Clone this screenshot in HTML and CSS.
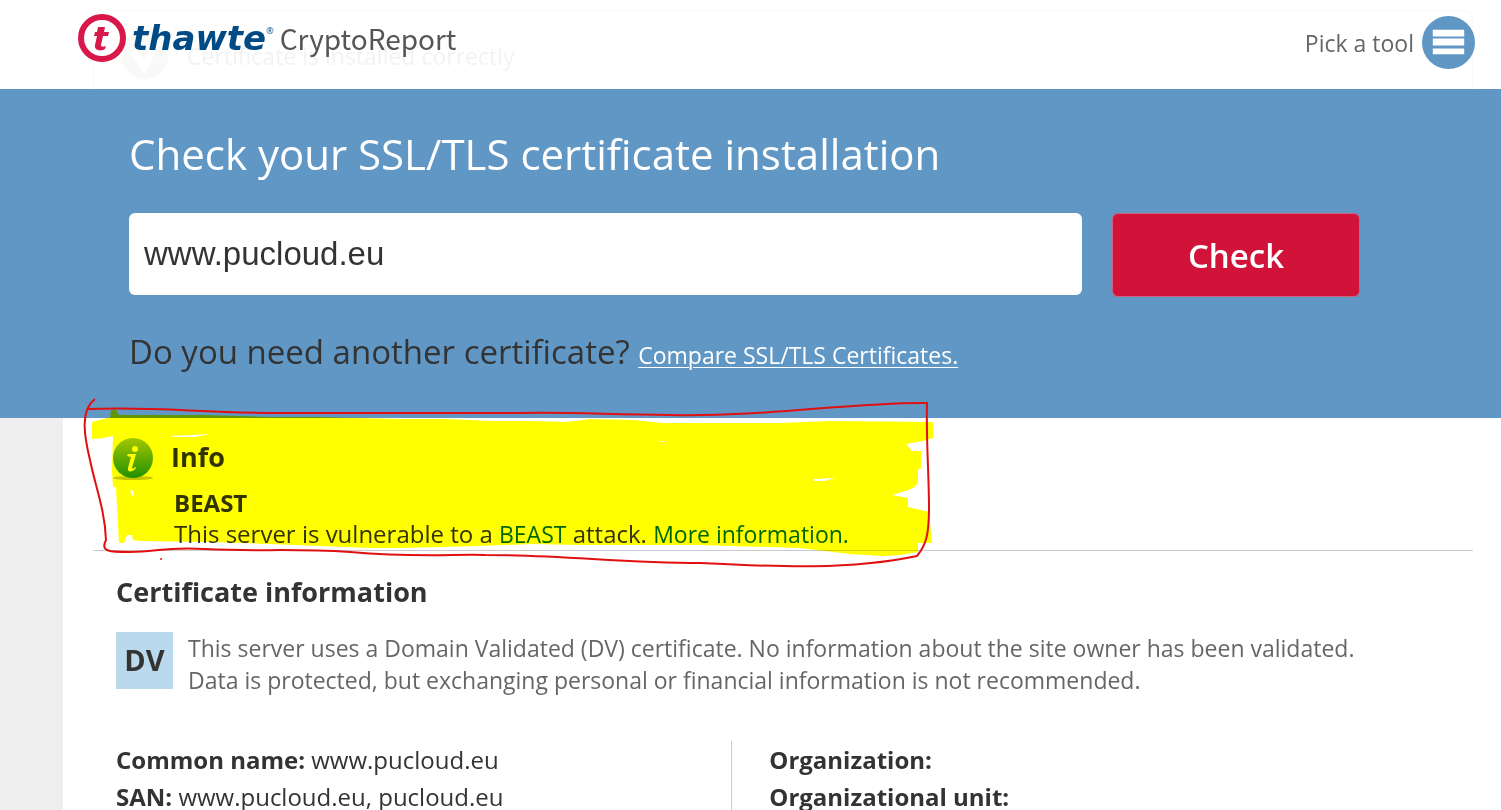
FILE: index.html
```html
<!DOCTYPE html>
<html lang="en">
<head>
<meta charset="utf-8">
<title>thawte CryptoReport</title>
<link rel="stylesheet" href="styles.css">
</head>
<body>
<header class="site-header">
  <div class="under-panel" aria-hidden="true">
    <svg class="under-icon" viewBox="0 0 48 48"><circle cx="24" cy="24" r="24" fill="#8cb878"/><path d="M12 20l11 16 13-26" fill="none" stroke="#fff" stroke-width="8"/></svg>
    <span>Certificate is installed correctly</span>
  </div>
  <a class="brand" href="#">
    <svg class="brand-mark" viewBox="0 0 48 48" aria-hidden="true">
      <circle cx="24" cy="24" r="21" fill="#fff" stroke="#d8184b" stroke-width="6"/>
      <path d="M20 13h7l-1 5h5l-1 4h-5l-2 9c0 2 2 2 5 1l-1 3c-5 3-11 1-10-4l2-9h-3l1-4h2z" fill="#d8184b"/>
    </svg>
    <span class="brand-name">thawte</span><span class="brand-reg">®</span>
    <span class="brand-product">CryptoReport</span>
  </a>
  <button class="tool-picker" type="button">
    <span>Pick a tool</span>
    <svg class="tool-icon" viewBox="0 0 54 54" aria-hidden="true">
      <circle cx="27" cy="27" r="27" fill="#6097c5"/>
      <path d="M11 14h32v7H11zM11 23h32v7H11zM11 33h32v6H11z" fill="#fff"/>
    </svg>
  </button>
</header>
<main>
  <section class="checker">
    <h1 class="checker-title"><label for="host">Check your SSL/TLS certificate installation</label></h1>
    <form class="checker-form">
      <input class="host-input" id="host" type="text" value="www.pucloud.eu">
      <button class="check-button" type="button">Check</button>
    </form>
    <p class="compare">Do you need another certificate? <a class="compare-link" href="#">Compare SSL/TLS Certificates.</a></p>
  </section>
  <section class="results">
    <div class="info">
      <svg class="info-icon" viewBox="0 0 42 42" aria-hidden="true">
        <defs><linearGradient id="green" x1="0" y1="0" x2="0" y2="1"><stop offset="0" stop-color="#a4c71d"/><stop offset="1" stop-color="#219100"/></linearGradient></defs>
        <ellipse cx="21" cy="40" rx="20" ry="2" fill="#8c8c8c" opacity=".5"/>
        <circle cx="21" cy="20" r="20" fill="url(#green)"/>
        <circle cx="23" cy="11" r="3" fill="#fff"/>
        <path d="M16 16h8l-4 14c0 1 1 1 3-1l1 1c-3 4-9 5-8 0l3-11-4-1z" fill="#fff"/>
      </svg>
      <div class="info-text">
        <h2 class="heading">Info</h2>
        <div class="info-body">
          <h3 class="info-name">BEAST</h3>
          <p class="info-line">This server is vulnerable to a <a class="link" href="#">BEAST</a> attack. <a class="link" href="#">More information.</a></p>
        </div>
      </div>
      <svg class="marker" viewBox="0 0 860 180" aria-hidden="true">
        <path fill="#ff0" fill-rule="evenodd" d="M27 18H30L31 10H36L39 15L123 15L190 17L237 17L320 19L367 19L410 21L450 21L487 22L510 19L553 20L583 23H700L750 21L853 22V38L843 41L826 44L832 51H841V68L838 70V80C838 89 825 91 812 95L828 98V107L849 112L852 143H838V152L820 155L803 156L770 154L720 148L620 145L500 145L453 144L400 146L320 148L290 148L190 144L130 142L60 141L53 140L52 135L47 135L44 143H39L36 87H33L32 70L33 36L24 38L12 39V22ZM91 36L112 35L130 34L115 37L93 37ZM50 90L53 91L54 95L52 96ZM577 41H586L583 42ZM733 79L755 78L745 81H734Z"/>
      </svg>
      <svg class="pen" viewBox="0 0 860 180" aria-hidden="true">
        <path d="M15 -1C0 10 4 35 10 60C15 85 25 110 26 140C20 152 30 152 50 152C80 151 85 147 125 149C180 152 205 148 270 152C340 158 370 154 405 155C485 155 540 163 620 163C700 167 770 170 837 156C846 145 849 135 849 108C849 75 846 40 847 3C770 2 690 17 590 15C530 15 500 12 440 13H200C120 13 75 6 8 9" fill="none" stroke="#e01010" stroke-width="2"/>
        <circle cx="81" cy="159" r="1" fill="#ed1515"/>
      </svg>
    </div>
    <div class="certificate">
      <h2 class="heading">Certificate information</h2>
      <div class="validation">
        <span class="dv-badge">DV</span>
        <p class="validation-text">This server uses a Domain Validated (DV) certificate. No information about the site owner has been validated.<br>Data is protected, but exchanging personal or financial information is not recommended.</p>
      </div>
      <div class="details">
        <div class="details-column">
          <p><b>Common name:</b> www.pucloud.eu</p>
          <p><b>SAN:</b> www.pucloud.eu, pucloud.eu</p>
        </div>
        <div class="details-column details-right">
          <p><b>Organization:</b></p>
          <p><b>Organizational unit:</b></p>
        </div>
      </div>
    </div>
  </section>
</main>
</body>
</html>
```

FILE: styles.css
```css
* {
  box-sizing: border-box;
}

html {
  overflow: hidden;
}

body {
  margin: 0;
  height: 100vh;
  overflow: hidden;
  background: #eee;
  color: #333;
  font: 24px/32px "Open Sans", "Noto Sans", sans-serif;
}

h1, h2, h3, p {
  margin: 0;
}

.site-header {
  position: relative;
  display: flex;
  justify-content: space-between;
  align-items: flex-start;
  padding: 14px 26px 20px 78px;
  background: #fff;
}

.under-panel {
  position: absolute;
  inset: 10px 28px 0 93px;
  border: 1px solid #999;
  border-bottom: 0;
  border-radius: 8px 8px 0 0;
  opacity: 0.06;
  display: flex;
  gap: 18px;
  padding: 20px 27px 0;
}

.under-icon {
  width: 48px;
  height: 48px;
}

.under-panel span {
  margin-top: 9px;
  font-size: 23px;
}

.brand {
  position: relative;
  display: flex;
  align-items: center;
  color: #555;
  text-decoration: none;
}

.brand-mark {
  width: 48px;
  height: 48px;
  margin-right: 6px;
}

.brand-name {
  color: #004b85;
  font: italic bold 34px/48px "DejaVu Sans", sans-serif;
}

.brand-reg {
  align-self: flex-start;
  margin-top: 9px;
  color: #004b85;
  font-size: 9px;
  line-height: 16px;
}

.brand-product {
  margin-left: 6px;
  font: 28px/48px "Noto Sans CJK SC", sans-serif;
}

.tool-picker {
  position: relative;
  display: flex;
  align-items: center;
  gap: 8px;
  margin-top: 2px;
  padding: 0;
  border: 0;
  background: none;
  color: #666;
  font: 23px/32px "Open Sans", sans-serif;
}

.tool-icon {
  width: 53px;
  height: 53px;
}

.checker {
  padding: 39px 141px 39px 129px;
  background: #6097c5;
}

.checker-title {
  color: #fff;
  font-size: 42px;
  font-weight: 400;
  line-height: 52px;
}

.checker-form {
  display: flex;
  gap: 30px;
  margin-top: 33px;
}

.host-input {
  flex: 1;
  min-width: 0;
  height: 82px;
  padding: 0 15px;
  border: 0;
  border-radius: 6px;
  background: #fff;
  color: #333;
  font: 33px "Liberation Sans", sans-serif;
}

.check-button {
  width: 248px;
  height: 84px;
  border: 1px solid #d0607f;
  border-radius: 6px;
  background: #d1133a;
  color: #fff;
  font: 600 33px "Open Sans", sans-serif;
}

.compare {
  margin-top: 31px;
  font-size: 33px;
  line-height: 48px;
}

.compare-link {
  color: #fff;
  font-size: 23px;
  text-underline-offset: 3px;
  text-decoration-thickness: 1px;
}

.results {
  min-height: 400px;
  margin-left: 63px;
  padding: 0 28px 0 30px;
  background: #fff;
}

.info {
  position: relative;
  display: flex;
  gap: 17px;
  padding: 20px 0 0 19px;
  border-bottom: 1px solid #ccc;
}

.info-icon {
  width: 42px;
  height: 42px;
}

.heading {
  font-size: 27px;
  font-weight: 700;
  line-height: 38px;
}

.info-body {
  padding: 12px 0 0 3px;
}

.info-name {
  font-size: 24px;
  line-height: 30px;
}

.info-line {
  line-height: 32px;
}

.link {
  color: #006699;
  font-size: 23px;
  text-decoration: none;
}

.marker,
.pen {
  position: absolute;
  top: -18px;
  left: -13px;
  width: 860px;
  height: 180px;
  overflow: visible;
  pointer-events: none;
}

.marker {
  mix-blend-mode: multiply;
}

.certificate {
  padding: 22px 0 0 23px;
}

.validation {
  display: flex;
  gap: 15px;
  margin-top: 21px;
}

.dv-badge {
  flex: none;
  width: 57px;
  height: 57px;
  background: #bad9ed;
  font: 700 29px/56px "Open Sans", sans-serif;
  text-align: center;
}

.validation-text {
  color: #666;
  font-size: 23px;
}

.details {
  display: grid;
  grid-template-columns: 73fr 88fr;
  margin-top: 45px;
}

.details-column {
  line-height: 37px;
}

.details-right {
  padding-left: 37px;
  border-left: 1px solid #ccc;
}
```
